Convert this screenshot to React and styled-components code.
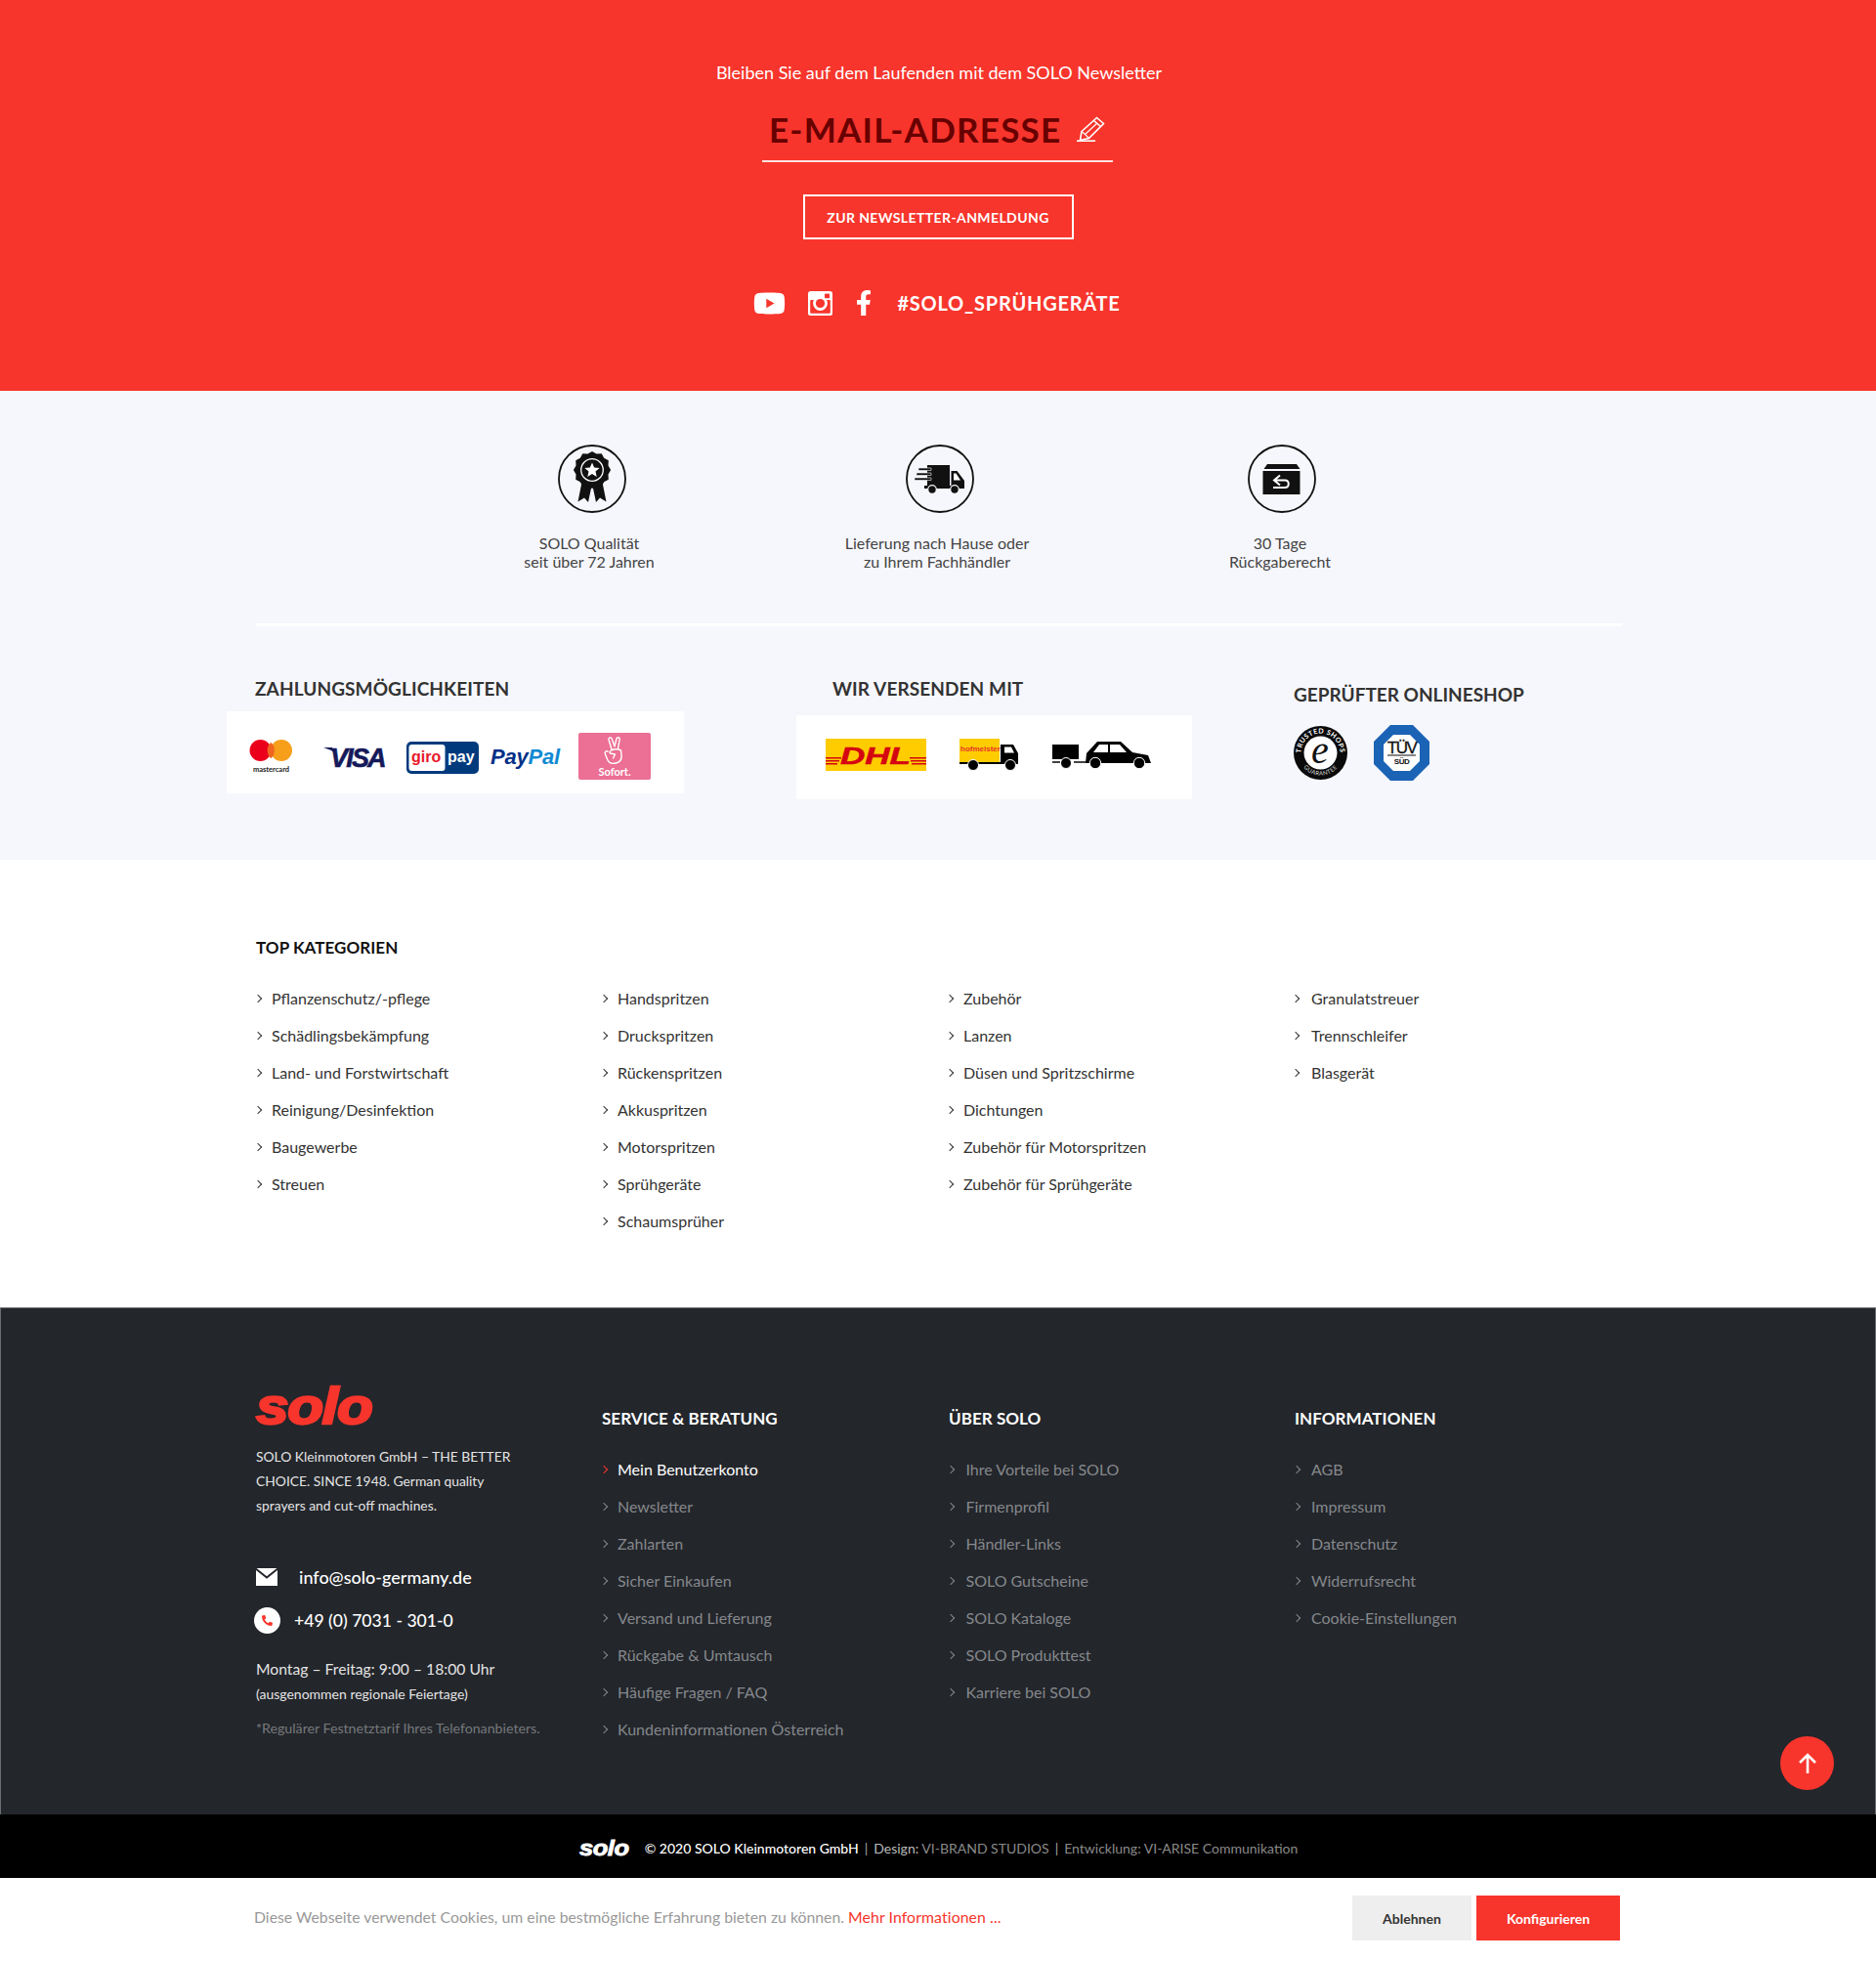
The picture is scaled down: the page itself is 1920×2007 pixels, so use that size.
import styled, { createGlobalStyle } from "styled-components";
import { FaYoutube, FaFacebookF, FaPhoneAlt } from "react-icons/fa";

const RED = "#f7352c";

const GlobalStyle = createGlobalStyle`
  html, body { margin: 0; padding: 0; background: #fff; }
  body { font-family: Lato, "Open Sans", "Liberation Sans", sans-serif; color: #333; }
  * { box-sizing: border-box; }
`;

const categories = [
  ["Pflanzenschutz/-pflege", "Schädlingsbekämpfung", "Land- und Forstwirtschaft", "Reinigung/Desinfektion", "Baugewerbe", "Streuen"],
  ["Handspritzen", "Druckspritzen", "Rückenspritzen", "Akkuspritzen", "Motorspritzen", "Sprühgeräte", "Schaumsprüher"],
  ["Zubehör", "Lanzen", "Düsen und Spritzschirme", "Dichtungen", "Zubehör für Motorspritzen", "Zubehör für Sprühgeräte"],
  ["Granulatstreuer", "Trennschleifer", "Blasgerät"],
];

const service = ["Newsletter", "Zahlarten", "Sicher Einkaufen", "Versand und Lieferung", "Rückgabe & Umtausch", "Häufige Fragen / FAQ", "Kundeninformationen Österreich"];
const about = ["Ihre Vorteile bei SOLO", "Firmenprofil", "Händler-Links", "SOLO Gutscheine", "SOLO Kataloge", "SOLO Produkttest", "Karriere bei SOLO"];
const infos = ["AGB", "Impressum", "Datenschutz", "Widerrufsrecht", "Cookie-Einstellungen"];

const Page = styled.div`
  position: relative;
  width: 1920px;
  height: 2007px;
  overflow: hidden;
`;

/* newsletter */
const Newsletter = styled.section`
  height: 400px;
  background: ${RED};
  color: #fff;
  display: flex;
  flex-direction: column;
  align-items: center;
  padding-top: 60px;
`;
const Lead = styled.p`
  margin: 0 0 0 2px;
  font-size: 18px;
  line-height: 28px;
`;
const EmailField = styled.div`
  width: 359px;
  height: 62px;
  margin-top: 16px;
  margin-left: -1px;
  padding: 0 0 5px 7px;
  display: flex;
  align-items: center;
  gap: 16px;
  border-bottom: 2px solid rgba(255, 255, 255, 0.85);
  color: #680000;
  font-size: 35px;
  font-weight: 700;
  letter-spacing: 1.25px;
  white-space: nowrap;
`;
const SubscribeButton = styled.button`
  width: 277px;
  height: 46px;
  margin-top: 33px;
  background: transparent;
  border: 2px solid #fff;
  color: #fff;
  font-family: inherit;
  font-size: 14px;
  font-weight: 700;
  letter-spacing: 0.4px;
`;
const SocialRow = styled.div`
  display: flex;
  align-items: center;
  height: 28px;
  margin-top: 51px;
  margin-left: -2px;
  svg { display: block; flex: none; }
`;
const SocialGap = styled.span`
  width: ${(p) => p.$width}px;
`;
const Hashtag = styled.span`
  margin-left: 21px;
  font-size: 20px;
  font-weight: 700;
  letter-spacing: 0.75px;
`;

/* benefits and partners */
const Grey = styled.section`
  height: 480px;
  background: #f6f7fc;
  padding-top: 55px;
`;
const Benefits = styled.div`
  display: grid;
  grid-template-columns: 356px 356px 346px;
  padding-left: 425px;
`;
const Benefit = styled.div`
  display: flex;
  flex-direction: column;
  align-items: center;
  font-size: 16px;
  line-height: 19px;
  color: #444;
  text-align: center;
  svg { margin-left: ${(p) => p.$shift || 6}px; margin-bottom: 21px; display: block; }
`;
const Rule = styled.div`
  width: 1398px;
  height: 3px;
  margin: 54px 0 0 262px;
  background: #fff;
`;
const Partners = styled.div`
  display: flex;
  align-items: flex-start;
  padding: 49px 0 0 232px;
`;
const PartnerGroup = styled.div`
  width: ${(p) => p.$width}px;
  margin-right: ${(p) => p.$after}px;
`;
const PartnerTitle = styled.h4`
  margin: ${(p) => p.$top || 0}px 0 0 ${(p) => p.$indent}px;
  font-size: 19px;
  line-height: 30px;
  font-weight: 700;
  letter-spacing: ${(p) => p.$track ?? 0.1}px;
  color: #333;
  white-space: nowrap;
`;
const LogoBox = styled.div`
  height: ${(p) => p.$height}px;
  margin-top: ${(p) => p.$top}px;
  padding: ${(p) => p.$shiftDown || 0}px 0 ${(p) => p.$shiftUp || 0}px ${(p) => p.$pad}px;
  background: #fff;
  display: flex;
  align-items: center;
`;
const Logo = styled.svg`
  flex: none;
  display: block;
  margin-left: ${(p) => p.$left || 0}px;
`;
const Sofort = styled.div`
  flex: none;
  width: 74px;
  height: 48px;
  margin-left: 12px;
  margin-top: -2px;
  border-radius: 2px;
  background: #ec6f95;
  color: #fff;
  display: flex;
  flex-direction: column;
  align-items: center;
  padding-top: 4px;
  font-size: 11px;
  line-height: 13px;
  font-weight: 700;
  svg { display: block; }
`;
const Badges = styled.div`
  display: flex;
  align-items: center;
  margin-top: 16px;
  gap: 27px;
`;

/* top categories */
const Categories = styled.section`
  height: 458px;
  padding: 78px 0 0 262px;
`;
const CategoryTitle = styled.h4`
  margin: 0 0 21px;
  font-size: 17px;
  line-height: 24px;
  font-weight: 700;
  letter-spacing: 0.05px;
  color: #111;
`;
const Columns = styled.div`
  display: grid;
  grid-template-columns: repeat(4, 354px);
`;
const LinkList = styled.ul`
  margin: 0;
  padding: 0;
  list-style: none;
`;
const LinkItem = styled.li`
  position: relative;
  height: 38px;
  padding-left: ${(p) => p.$pad || 16}px;
  font-size: 16px;
  line-height: 37px;
  white-space: nowrap;
  color: ${(p) => (p.$dark ? (p.$active ? "#fff" : "#85888c") : "#333")};
  &::before {
    content: "";
    position: absolute;
    left: -1px;
    top: 16px;
    width: 5px;
    height: 5px;
    border-top: 1.3px solid ${(p) => (p.$dark ? (p.$active ? RED : "#85888c") : "#333")};
    border-right: 1.3px solid ${(p) => (p.$dark ? (p.$active ? RED : "#85888c") : "#333")};
    transform: rotate(45deg);
  }
`;

/* dark footer */
const Footer = styled.footer`
  height: 519px;
  background: #23262b;
  border: 1px solid #6a6c70;
  border-bottom: 0;
  padding: 79px 0 0 261px;
  display: grid;
  grid-template-columns: 354px 355px 354px 354px;
  align-items: start;
`;
const FooterColumn = styled.div`
  padding-top: 22px;
`;
const FooterTitle = styled.h4`
  margin: 0 0 21px;
  font-size: 17px;
  line-height: 24px;
  font-weight: 700;
  letter-spacing: 0.05px;
  color: #fff;
`;
const BrandLogo = styled.div`
  flex: none;
  width: ${(p) => p.$width}px;
  height: ${(p) => p.$height}px;
  font-family: "Liberation Sans", Arial, sans-serif;
  font-size: ${(p) => p.$size}px;
  line-height: ${(p) => p.$height}px;
  font-weight: 700;
  font-style: italic;
  letter-spacing: ${(p) => p.$track}px;
  color: ${(p) => p.$color};
  -webkit-text-stroke: ${(p) => p.$stroke}px ${(p) => p.$color};
  transform: scaleX(1.16);
  transform-origin: left center;
`;
const AboutText = styled.p`
  margin: 18px 0 0;
  font-size: 13.85px;
  line-height: 25px;
  color: #e4e4e4;
`;
const ContactRow = styled.div`
  display: flex;
  align-items: center;
  height: 28px;
  margin-top: ${(p) => p.$top}px;
  font-size: ${(p) => p.$size}px;
  font-weight: 500;
  color: #fff;
`;
const MailIcon = styled.svg`
  display: block;
  margin-right: 22px;
`;
const PhoneCircle = styled.span`
  width: 27px;
  height: 27px;
  margin: 0 14px 0 -2px;
  border-radius: 50%;
  background: #fff;
  color: ${RED};
  display: flex;
  align-items: center;
  justify-content: center;
  font-size: 11px;
`;
const Hours = styled.div`
  margin-top: 24px;
  font-size: 15.7px;
  line-height: 24px;
  color: #e4e4e4;
`;
const HoursNote = styled.div`
  margin-top: 4px;
  font-size: 14px;
  line-height: 20px;
  color: #e4e4e4;
`;
const TariffNote = styled.div`
  margin-top: 15px;
  font-size: 14.2px;
  line-height: 20px;
  color: #76797c;
  white-space: nowrap;
`;

/* bottom */
const BottomBar = styled.div`
  height: 65px;
  background: #000;
  display: flex;
  align-items: center;
  justify-content: center;
  padding: 4px 0 0 1px;
  font-size: 14px;
  color: #8a8a8a;
`;
const Copyright = styled.span`
  margin-left: 17px;
  color: #fff;
  font-weight: 500;
`;
const Separator = styled.span`
  margin: 0 6px;
  color: #aaa;
`;
const BottomLabel = styled.span`
  color: #bbb;
`;
const CookieBar = styled.div`
  height: 85px;
  padding: 18px 262px 0 260px;
  display: flex;
  align-items: flex-start;
`;
const CookieText = styled.p`
  flex: 1;
  margin: 0;
  font-size: 15.8px;
  line-height: 43px;
  color: #999;
`;
const CookieLink = styled.a`
  color: ${RED};
  letter-spacing: 0.1px;
`;
const CookieButton = styled.button`
  flex: none;
  height: 46px;
  width: ${(p) => p.$width}px;
  margin-left: ${(p) => p.$left || 0}px;
  border: 0;
  background: ${(p) => (p.$primary ? RED : "#eeeeee")};
  color: ${(p) => (p.$primary ? "#fff" : "#333")};
  font-family: inherit;
  font-size: 14px;
  font-weight: 700;
`;
const ScrollTop = styled.button`
  position: absolute;
  right: 43px;
  bottom: 175px;
  width: 55px;
  height: 55px;
  border: 0;
  padding: 0;
  border-radius: 50%;
  background: ${RED};
  display: flex;
  align-items: center;
  justify-content: center;
`;

const InstagramIcon = () => (
  <svg width="25" height="25" viewBox="0 0 25 25">
    <rect width="25" height="25" rx="2.5" fill="#fff" />
    <rect x="2.2" y="9" width="20.6" height="13.8" rx="1" fill={RED} />
    <rect x="17" y="2.6" width="5" height="4.6" fill={RED} />
    <circle cx="12.5" cy="12.5" r="7.4" fill="#fff" />
    <circle cx="12.5" cy="12.5" r="4.6" fill={RED} />
  </svg>
);

const PencilIcon = () => (
  <svg width="29" height="26" viewBox="0 0 29 26" fill="none" stroke="#fff" strokeWidth="1.6">
    <path d="M5 15.500 20.500 1.500 27.500 7.500 12.500 22.500 3.500 24.500Z" />
    <path d="M17.500 4.500 24.500 10.500" />
    <path d="M8.500 18.500 21 7M5 15.500 8.500 18.500 12.500 22.500" strokeWidth="1.100" />
    <path d="M0 25.200H19" strokeWidth="1.600" />
  </svg>
);

const AwardIcon = () => (
  <svg width="70" height="70" viewBox="0 0 70 70">
    <circle cx="35" cy="35" r="34" fill="none" stroke="#111" strokeWidth="1.8" />
    <path d="M25 36 20.500 58.500 27 54.500 31 59 35 40 39 59 43 54.500 49.500 58.500 45 36Z" fill="#111" />
    <path d="M35 7l4.500 2.600 5.200-.4 2.500 4.600 4.600 2.400-.3 5.300 2.600 4.500-2.600 4.500.3 5.300-4.600 2.400-2.500 4.600-5.200-.4L35 45l-4.500-2.600-5.200.4-2.500-4.600-4.600-2.400.3-5.300L15.900 26l2.600-4.500-.3-5.300 4.600-2.400 2.500-4.600 5.200.4Z" fill="#111" />
    <circle cx="35" cy="26" r="11.300" fill="none" stroke="#fff" strokeWidth="1.300" />
    <path d="M35 18.500l2.200 5 5.400.5-4.100 3.600 1.200 5.300-4.700-2.800-4.700 2.800 1.200-5.300-4.100-3.600 5.400-.5Z" fill="#fff" />
  </svg>
);

const TruckIcon = () => (
  <svg width="70" height="70" viewBox="0 0 70 70">
    <circle cx="35" cy="35" r="34" fill="none" stroke="#111" strokeWidth="1.8" />
    <path d="M22 21h23v23H22Z" fill="#111" />
    <path d="M13 24h13v2.500H13ZM11 29h15v2.500H11ZM9 34h17v2.500H9Z" fill="#111" stroke="#f6f7fc" strokeWidth=".6" />
    <path d="M46.500 27h6l7.500 10v7H46.500Z" fill="#111" />
    <path d="M49 29.500h2.500l4.500 7h-7Z" fill="#fff" />
    <path d="M19 42h41v3H19Z" fill="#111" />
    <circle cx="27" cy="46" r="4.300" fill="#111" stroke="#f6f7fc" strokeWidth="1.200" />
    <circle cx="50" cy="46" r="4.300" fill="#111" stroke="#f6f7fc" strokeWidth="1.200" />
  </svg>
);

const ReturnIcon = () => (
  <svg width="70" height="70" viewBox="0 0 70 70">
    <circle cx="35" cy="35" r="34" fill="none" stroke="#111" strokeWidth="1.800" />
    <path d="M20 20h30l3.500 5H16.500Z" fill="#111" />
    <path d="M15.500 27h38v24h-38Z" fill="#111" />
    <path d="M33 31.500l-6 5 6 5M27.500 36.500H38c5 0 5 7.500 0 7.500H26" fill="none" stroke="#fff" strokeWidth="2" />
  </svg>
);

const MastercardLogo = () => (
  <Logo width="45" height="36" viewBox="0 0 45 36">
    <circle cx="11.500" cy="11" r="11" fill="#eb001b" />
    <circle cx="33" cy="11" r="11" fill="#f79e1b" />
    <path d="M22.250 2.800a11 11 0 0 1 0 16.400 11 11 0 0 1 0-16.400Z" fill="#f0651f" />
    <text x="22.500" y="33" textAnchor="middle" fontFamily="Lato" fontSize="7.500" fontWeight="700" fill="#222">mastercard</text>
  </Logo>
);

const VisaLogo = () => (
  <Logo $left={31} width="72" height="30" viewBox="0 0 72 30">
    <path d="M0 5h9l3 6-4-3Z" fill="#15195a" />
    <text x="7" y="25" fontFamily="Liberation Sans" fontSize="27" fontWeight="700" fontStyle="italic" letterSpacing="-1.800" stroke="#15195a" strokeWidth=".6" fill="#15195a">VISA</text>
  </Logo>
);

const GiropayLogo = () => (
  <Logo $left={13} width="74" height="33" viewBox="0 0 74 33">
    <rect width="74" height="33" rx="5" fill="#003a7d" />
    <rect x="2.500" y="3" width="37" height="27" rx="3" fill="#fff" />
    <text x="5" y="21" fontFamily="Liberation Sans" fontSize="16" fontWeight="700" fill="#e8182a">giro</text>
    <text x="42" y="21" fontFamily="Liberation Sans" fontSize="16" fontWeight="700" fill="#fff">pay</text>
  </Logo>
);

const PaypalLogo = () => (
  <Logo $left={12} width="78" height="24" viewBox="0 0 78 24">
    <text x="0" y="19" fontFamily="Liberation Sans" fontSize="22" fontWeight="700" fontStyle="italic" letterSpacing="-.2" fill="#003087">Pay<tspan fill="#0f8ad2">Pal</tspan></text>
  </Logo>
);

const PeaceHand = () => (
  <svg width="22" height="29" viewBox="0 0 22 29" fill="none" stroke="#fff" strokeWidth="1.400" strokeLinejoin="round" strokeLinecap="round">
    <path d="M8 13 5 3c-.5-2 2.500-3 3.200-1L11 10l2-8c.5-2 3.500-1.500 3.200.5L14.500 12" />
    <path d="M4 15c-2-1-3.500 1-2.500 3l2 5c1.500 4 5 5 9 4 4-1 6-4 5.500-8l-.5-5c-3-1.500-7-1.500-10 0-1.500 1-2 2-1 3l5 1-2 4" />
  </svg>
);

const DhlLogo = () => (
  <Logo width="103" height="33" viewBox="0 0 103 33">
    <rect width="103" height="33" fill="#ffcc00" />
    <path d="M0 19h16v1.500H0ZM0 22h14v1.500H0ZM0 25h12v1.500H0ZM86 19h17v1.500H86ZM87 22h16v1.500H87ZM88 25h15v1.500H88Z" fill="#d40511" />
    <text x="15" y="26" textLength="72" lengthAdjust="spacingAndGlyphs" fontFamily="Liberation Sans" fontSize="23" fontWeight="700" fontStyle="italic" stroke="#d40511" strokeWidth=".5" fill="#d40511">DHL</text>
  </Logo>
);

const HofmeisterLogo = () => (
  <Logo $left={34} width="61" height="33" viewBox="0 0 61 33">
    <rect width="41" height="25" fill="#ffcc00" />
    <text x="1" y="13" fontFamily="Liberation Sans" fontSize="8" fontWeight="700" fill="#e8332a">hofmeister</text>
    <path d="M0 24h42V6h13l5 9v11H0Z" fill="#000" />
    <path d="M46 8.500h7l3 6h-10Z" fill="#fff" />
    <circle cx="14" cy="27" r="5.500" fill="#000" stroke="#fff" />
    <circle cx="52" cy="27" r="5.500" fill="#000" stroke="#fff" />
  </Logo>
);

const CarLogo = () => (
  <Logo $left={34} width="101" height="29" viewBox="0 0 101 29">
    <path d="M0 4h27v15H0Z" fill="#000" />
    <path d="M0 22h8M22 22h14" stroke="#444" strokeWidth="2" />
    <circle cx="14" cy="23" r="5.500" fill="#000" stroke="#fff" />
    <path d="M35 13 46 1h24l12 11 16 3 3 8H34Z" fill="#000" />
    <path d="M48 4h9v8H42ZM59 4h10l7 8H59Z" fill="#fff" />
    <circle cx="44" cy="23" r="5.700" fill="#000" stroke="#fff" />
    <circle cx="89" cy="23" r="5.700" fill="#000" stroke="#fff" />
  </Logo>
);

const TrustedBadge = () => (
  <Logo width="55" height="55" viewBox="0 0 55 55">
    <circle cx="27.500" cy="27.500" r="27.500" fill="#0a0a0a" />
    <circle cx="27.500" cy="27.500" r="17" fill="#fff" />
    <defs>
      <path id="ts-top" d="M7.500 27.500a20 20 0 0 1 40 0" />
      <path id="ts-bottom" d="M4.500 27.500a23 23 0 0 0 46 0" />
    </defs>
    <text fontFamily="Lato" fontSize="7" fontWeight="700" fill="#fff" letterSpacing=".5">
      <textPath href="#ts-top" startOffset="50%" textAnchor="middle">TRUSTED SHOPS</textPath>
    </text>
    <text fontFamily="Lato" fontSize="6" fill="#ddd" letterSpacing=".4">
      <textPath href="#ts-bottom" startOffset="50%" textAnchor="middle">GUARANTEE</textPath>
    </text>
    <text x="27" y="38" textAnchor="middle" fontFamily="Liberation Serif" fontSize="40" fontStyle="italic" fill="#111">e</text>
  </Logo>
);

const TuvBadge = () => (
  <Logo width="57" height="57" viewBox="0 0 57 57">
    <path d="M17 0h23l17 17v23L40 57H17L0 40V17Z" fill="#1b63b5" />
    <path d="M20 10h17l10 10v17L37 47H20L10 37V20Z" fill="#fff" />
    <text x="28.500" y="29" textAnchor="middle" fontFamily="Liberation Sans" fontSize="17" letterSpacing="-1.500" stroke="#111" strokeWidth=".3" fill="#111">TÜV</text>
    <path d="M14 31h29" stroke="#111" strokeWidth="1" />
    <text x="28.500" y="40" textAnchor="middle" fontFamily="Liberation Sans" fontSize="8" fontWeight="700" letterSpacing="-.5" fill="#111">SÜD</text>
  </Logo>
);

const MenuColumn = ({ title, links, active, pad }) => (
  <FooterColumn>
    <FooterTitle>{title}</FooterTitle>
    <LinkList>
      {active && <LinkItem $dark $active $pad={pad}>{active}</LinkItem>}
      {links.map((l) => <LinkItem $dark $pad={pad} key={l}>{l}</LinkItem>)}
    </LinkList>
  </FooterColumn>
);

export default function App() {
  return (
    <Page>
      <GlobalStyle />
      <Newsletter>
        <Lead>Bleiben Sie auf dem Laufenden mit dem SOLO Newsletter</Lead>
        <EmailField>E-MAIL-ADRESSE <PencilIcon /></EmailField>
        <SubscribeButton>ZUR NEWSLETTER-ANMELDUNG</SubscribeButton>
        <SocialRow>
          <FaYoutube size={33} />
          <SocialGap $width={23} />
          <InstagramIcon />
          <SocialGap $width={19} />
          <FaFacebookF size={26} />
          <Hashtag>#SOLO_SPRÜHGERÄTE</Hashtag>
        </SocialRow>
      </Newsletter>

      <Grey>
        <Benefits>
          <Benefit><AwardIcon />SOLO Qualität<br />seit über 72 Jahren</Benefit>
          <Benefit><TruckIcon />Lieferung nach Hause oder<br />zu Ihrem Fachhändler</Benefit>
          <Benefit $shift={4}><ReturnIcon />30 Tage<br />Rückgaberecht</Benefit>
        </Benefits>
        <Rule />
        <Partners>
          <PartnerGroup $width={468} $after={115}>
            <PartnerTitle $indent={29}>ZAHLUNGSMÖGLICHKEITEN</PartnerTitle>
            <LogoBox $height={84} $top={8} $pad={23} $shiftDown={10}>
              <MastercardLogo />
              <VisaLogo />
              <GiropayLogo />
              <PaypalLogo />
              <Sofort><PeaceHand />Sofort.</Sofort>
            </LogoBox>
          </PartnerGroup>
          <PartnerGroup $width={405} $after={104}>
            <PartnerTitle $indent={37}>WIR VERSENDEN MIT</PartnerTitle>
            <LogoBox $height={86} $top={12} $pad={30} $shiftUp={6}>
              <DhlLogo />
              <HofmeisterLogo />
              <CarLogo />
            </LogoBox>
          </PartnerGroup>
          <PartnerGroup $width={340} $after={0}>
            <PartnerTitle $indent={0} $top={6} $track={0}>GEPRÜFTER ONLINESHOP</PartnerTitle>
            <Badges>
              <TrustedBadge />
              <TuvBadge />
            </Badges>
          </PartnerGroup>
        </Partners>
      </Grey>

      <Categories>
        <CategoryTitle>TOP KATEGORIEN</CategoryTitle>
        <Columns>
          {categories.map((col, i) => (
            <LinkList key={i}>
              {col.map((c) => <LinkItem $pad={i === 3 ? 18 : 16} key={c}>{c}</LinkItem>)}
            </LinkList>
          ))}
        </Columns>
      </Categories>

      <Footer>
        <div>
          <BrandLogo $width={119} $height={42} $size={52} $track={-1.2} $stroke={2.4} $color={RED}>solo</BrandLogo>
          <AboutText>SOLO Kleinmotoren GmbH – THE BETTER<br />CHOICE. SINCE 1948. German quality<br />sprayers and cut-off machines.</AboutText>
          <ContactRow $top={47} $size={18}>
            <MailIcon width="22" height="18" viewBox="0 0 22 18">
              <rect width="22" height="18" fill="#fff" />
              <path d="M-1 0 11 9.500 23 0" fill="none" stroke="#23262b" strokeWidth="2" />
            </MailIcon>
            info@solo-germany.de
          </ContactRow>
          <ContactRow $top={16} $size={17.6}>
            <PhoneCircle><FaPhoneAlt /></PhoneCircle>
            +49 (0) 7031 - 301-0
          </ContactRow>
          <Hours>Montag – Freitag: 9:00 – 18:00 Uhr</Hours>
          <HoursNote>(ausgenommen regionale Feiertage)</HoursNote>
          <TariffNote>*Regulärer Festnetztarif Ihres Telefonanbieters.</TariffNote>
        </div>
        <MenuColumn title="SERVICE & BERATUNG" active="Mein Benutzerkonto" links={service} pad={16} />
        <MenuColumn title="ÜBER SOLO" links={about} pad={17.5} />
        <MenuColumn title="INFORMATIONEN" links={infos} pad={17} />
      </Footer>

      <BottomBar>
        <BrandLogo $width={50} $height={26} $size={22} $track={-0.4} $stroke={0.8} $color="#fff">solo</BrandLogo>
        <Copyright>© 2020 SOLO Kleinmotoren GmbH</Copyright>
        <Separator>|</Separator>
        <BottomLabel>Design:</BottomLabel>&nbsp;VI-BRAND STUDIOS
        <Separator>|</Separator>
        Entwicklung: VI-ARISE Communikation
      </BottomBar>

      <CookieBar>
        <CookieText>
          Diese Webseite verwendet Cookies, um eine bestmögliche Erfahrung bieten zu können. <CookieLink>Mehr Informationen ...</CookieLink>
        </CookieText>
        <CookieButton $width={122}>Ablehnen</CookieButton>
        <CookieButton $primary $left={5} $width={147}>Konfigurieren</CookieButton>
      </CookieBar>

      <ScrollTop aria-label="Nach oben">
        <svg width="20" height="22" viewBox="0 0 20 22" fill="none" stroke="#fff" strokeWidth="2.600">
          <path d="M10 21V2M2 10l8-8 8 8" />
        </svg>
      </ScrollTop>
    </Page>
  );
}
